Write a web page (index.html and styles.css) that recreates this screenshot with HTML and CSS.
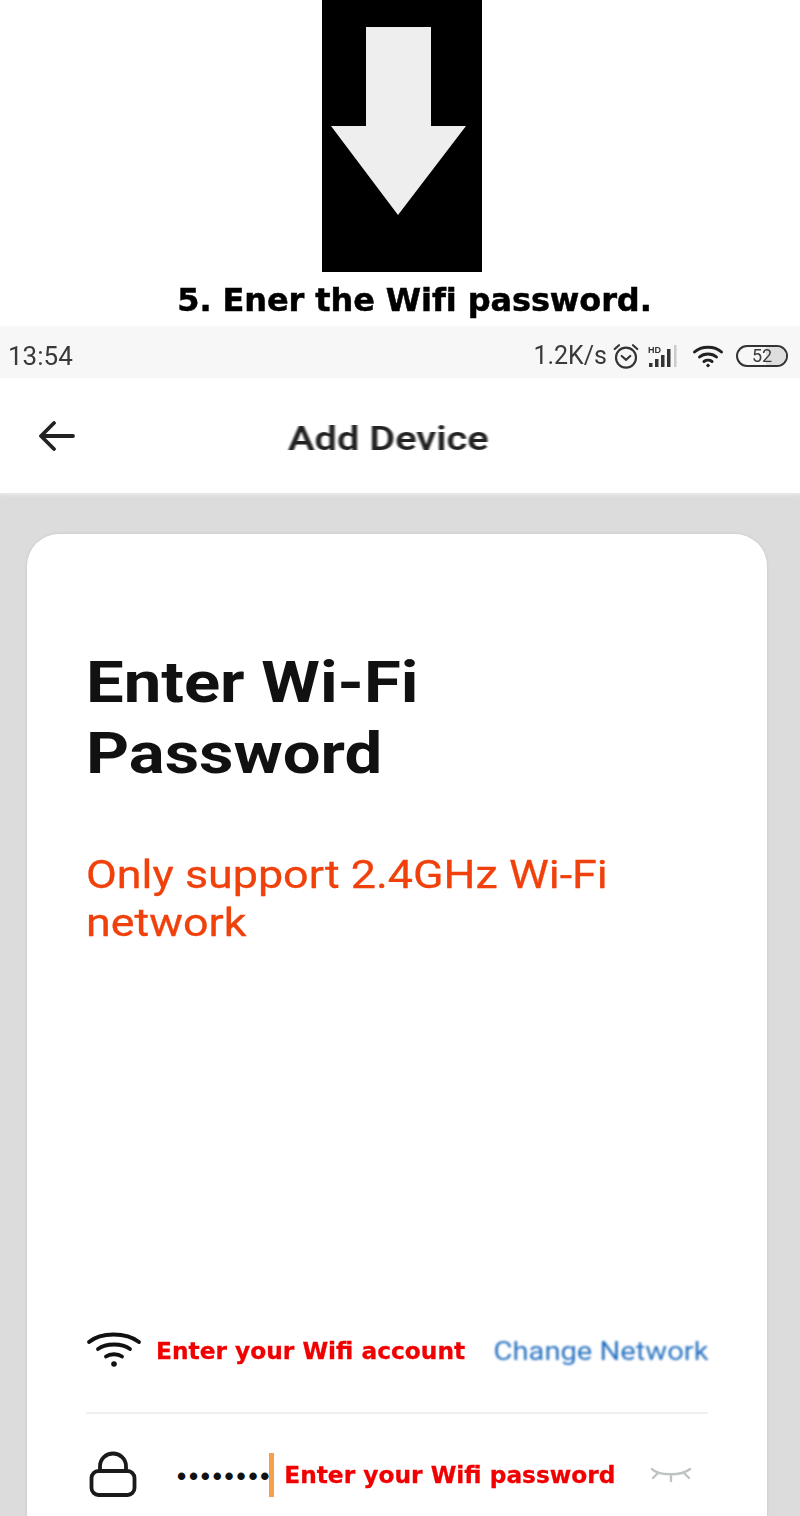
FILE: index.html
```html
<!DOCTYPE html>
<html lang="en">
<head>
<meta charset="utf-8">
<title>Enter Wi-Fi Password</title>
<link rel="stylesheet" href="styles.css">
</head>
<body>
<div class="page">
  <div class="arrow-row">
    <svg class="arrow" width="160" height="272" viewBox="0 0 160 272"><rect width="160" height="272" fill="#000"/><path d="M44 27H109V126H144L76 215L9 126H44Z" fill="#eeeeee"/></svg>
  </div>
  <h2 class="caption">5. Ener the Wifi password.</h2>
  <div class="status">
    <span class="time">13:54</span>
    <div class="status-right">
      <span class="speed">1.2K/s</span>
      <svg class="st-alarm" width="28" height="28" viewBox="0 0 26 26" fill="none" stroke="#333" stroke-width="2"><circle cx="13" cy="14.5" r="9.3"/><path d="M9 13l4 3.500 4-3.500M2.500 6.500 6.500 3M23.500 6.500 19.500 3" stroke-linecap="round"/></svg>
      <svg class="st-signal" width="32" height="24" viewBox="0 0 32 24"><text x="1" y="8.500" class="hd">HD</text><g fill="#333"><rect x="2" y="19" width="3.500" height="4"/><rect x="8" y="15" width="3.500" height="8"/><rect x="14" y="11" width="3.500" height="12"/><rect x="20" y="5" width="3.500" height="18"/></g><rect x="27" y="1" width="2.500" height="22" fill="#ccc"/></svg>
      <svg class="st-wifi" width="32" height="24" viewBox="0 0 32 24" fill="none" stroke="#222" stroke-width="3" stroke-linecap="round"><path d="M2.500 8C9.500 1.500 22.500 1.500 29.500 8"/><path d="M7.500 13C12 9 20 9 24.500 13"/><path d="M12 17.500c2.200-1.600 5.800-1.600 8 0"/><circle cx="16" cy="21.500" r="1.300" fill="#222" stroke-width="1"/></svg>
      <div class="battery"><span class="batt-fill"></span><span class="batt-num">52</span></div>
    </div>
  </div>
  <header class="bar">
    <svg class="back" width="40" height="36" viewBox="0 0 40 36" fill="none" stroke="#222" stroke-width="3.800" stroke-linecap="round" stroke-linejoin="round"><path d="M36 18H5M17 5 4 18l13 13"/></svg>
    <h1 class="bar-title">Add Device</h1>
  </header>
  <main class="body">
    <section class="card">
      <h3 class="title">Enter Wi-Fi<br>Password</h3>
      <p class="warn">Only support 2.4GHz Wi-Fi<br>network</p>
      <div class="spacer"></div>
      <div class="row row-net">
        <svg class="ic-wifi" width="56" height="40" viewBox="0 0 56 40" fill="none" stroke="#111" stroke-width="3.800" stroke-linecap="round"><path d="M3 11C15 1 40 1 53 11"/><path d="M12 18C20 12 36 12 44 18"/><path d="M20 25.500C24 22.500 32 22.500 36 25.500"/><circle cx="28" cy="33" r="2.800" fill="#111" stroke="none"/></svg>
        <span class="red red-net">Enter your Wifi account</span>
        <span class="change">Change Network</span>
      </div>
      <div class="rule"></div>
      <div class="row row-pass">
        <svg class="ic-lock" width="48" height="48" viewBox="0 0 48 48" fill="none" stroke="#1a1a1a" stroke-width="3.800"><rect x="2.500" y="21" width="43" height="24" rx="7"/><path d="M11 21v-5c0-7 6-12.500 13-12.500S37 9 37 16v5"/></svg>
        <span class="dots">••••••••</span>
        <span class="caret"></span>
        <span class="red red-pass">Enter your Wifi password</span>
        <svg class="ic-eye" width="42" height="16" viewBox="0 0 42 16" fill="none" stroke="#bfc3c4" stroke-width="2.400" stroke-linecap="round"><path d="M2 2c6 7 30 7 38 0M8 6 3 11M21 9v5M34 6l5 5"/></svg>
      </div>
    </section>
  </main>
</div>
</body>
</html>
```

FILE: styles.css
```css
html, body {
  margin: 0;
  padding: 0;
  background: #fff;
}
.page {
  width: 800px;
  height: 1516px;
  overflow: hidden;
  display: flex;
  flex-direction: column;
  font-family: "Liberation Sans", Arial, sans-serif;
}
.arrow-row {
  height: 272px;
  display: flex;
  justify-content: center;
  padding-left: 4px;
}
.arrow { display: block; }
.caption {
  margin: 0;
  height: 54px;
  line-height: 56px;
  text-align: center;
  font-family: "DejaVu Sans", sans-serif;
  font-size: 32px;
  font-weight: 700;
  letter-spacing: -0.1px;
  padding-left: 29px;
  color: #000;
  white-space: nowrap;
  -webkit-text-stroke: 0.5px #000;
  filter: blur(0.3px);
}
.status {
  height: 52px;
  box-sizing: border-box;
  padding: 7px 12px 0 8px;
  background: #f7f7f7;
  display: flex;
  align-items: center;
  justify-content: space-between;
  color: #3a3a3a;
}
.time {
  font-family: Roboto, sans-serif;
  font-size: 26px;
  filter: blur(0.3px);
}
.status-right {
  display: flex;
  align-items: center;
  filter: blur(0.3px);
}
.speed {
  font-family: Roboto, sans-serif;
  font-size: 25px;
}
.st-alarm { margin-left: 5px; }
.st-signal { margin-left: 7px; }
.st-wifi { margin-left: 13px; }
.hd {
  font-size: 9px;
  font-weight: 700;
  font-family: "Liberation Sans", Arial, sans-serif;
  fill: #333;
}
.battery {
  position: relative;
  margin-left: 12px;
  width: 52px;
  height: 22px;
  box-sizing: border-box;
  border: 2px solid #333;
  border-radius: 11px;
  overflow: hidden;
  display: flex;
  align-items: center;
  justify-content: center;
}
.batt-fill {
  position: absolute;
  top: 0;
  bottom: 0;
  right: 0;
  width: 20px;
  background: #dedede;
}
.batt-num {
  position: relative;
  font-family: Roboto, sans-serif;
  font-size: 18px;
}
.bar {
  height: 115px;
  background: #fff;
  display: flex;
  align-items: center;
  position: relative;
  box-shadow: 0 2px 3px #eaeaea;
  z-index: 1;
}
.back {
  margin-left: 37px;
  filter: blur(0.5px);
}
.bar-title {
  margin: 4px 0 0 211px;
  font-family: Roboto, "Liberation Sans", sans-serif;
  font-size: 34px;
  font-weight: 600;
  color: #222;
  transform: scaleX(1.17);
  transform-origin: left center;
  filter: blur(0.7px);
}
.body {
  flex: 1;
  background: #dcdcdc;
  padding: 41px 33px 0 27px;
  min-height: 0;
}
.card {
  height: 100%;
  background: #fff;
  border-radius: 32px 32px 0 0;
  box-shadow: 0 0 3px #c4c4c4;
  padding: 0 59px 0 60px;
  box-sizing: border-box;
  display: flex;
  flex-direction: column;
}
.title {
  margin: 113px 0 0 -1px;
  font-family: Roboto, "Liberation Sans", sans-serif;
  font-size: 58px;
  line-height: 71px;
  font-weight: 700;
  color: #111;
  transform: scaleX(1.155);
  transform-origin: left center;
  filter: blur(0.6px);
}
.warn {
  margin: 62px 0 0 -1px;
  font-family: Roboto, "Liberation Sans", sans-serif;
  font-size: 39px;
  line-height: 48px;
  font-weight: 400;
  color: #f0410c;
  -webkit-text-stroke: 0.3px #f0410c;
  transform: scaleX(1.15);
  transform-origin: left center;
  filter: blur(0.6px);
}
.spacer { flex: 1; }
.row {
  display: flex;
  align-items: center;
  position: relative;
}
.row-net {
  height: 64px;
  margin-bottom: 28px;
  margin-left: -1px;
}
.ic-wifi { filter: blur(0.5px); }
.red {
  font-family: "DejaVu Sans", sans-serif;
  color: #f00000;
  font-weight: 700;
  font-size: 23.3px;
  white-space: nowrap;
  margin-top: -2px;
  -webkit-text-stroke: 0.3px #f00000;
  filter: blur(0.3px);
}
.red-net { margin-left: 14px; }
.change {
  margin-left: auto;
  font-family: Roboto, "Liberation Sans", sans-serif;
  font-size: 25px;
  font-weight: 400;
  color: #2a73c2;
  white-space: nowrap;
  transform: scaleX(1.165);
  transform-origin: right center;
  filter: blur(0.8px);
}
.rule {
  height: 2px;
  background: #f0f0f0;
  margin-top: 1px;
  margin-left: -1px;
}
.row-pass {
  height: 100px;
  margin-bottom: 2px;
  box-sizing: border-box;
  padding-top: 22px;
  margin-left: -1px;
}
.ic-lock {
  margin-left: 3px;
  margin-top: -2px;
  filter: blur(0.5px);
}
.dots {
  margin-left: 40px;
  margin-top: 2px;
  font-size: 26px;
  letter-spacing: 2.800px;
  color: #111;
  font-weight: 700;
}
.caret {
  width: 5px;
  height: 44px;
  background: #f6a14a;
  margin-left: -3px;
  filter: blur(0.5px);
}
.red-pass { margin-left: 10px; }
.ic-eye {
  margin-left: auto;
  margin-right: 16px;
  filter: blur(0.5px);
}
```
